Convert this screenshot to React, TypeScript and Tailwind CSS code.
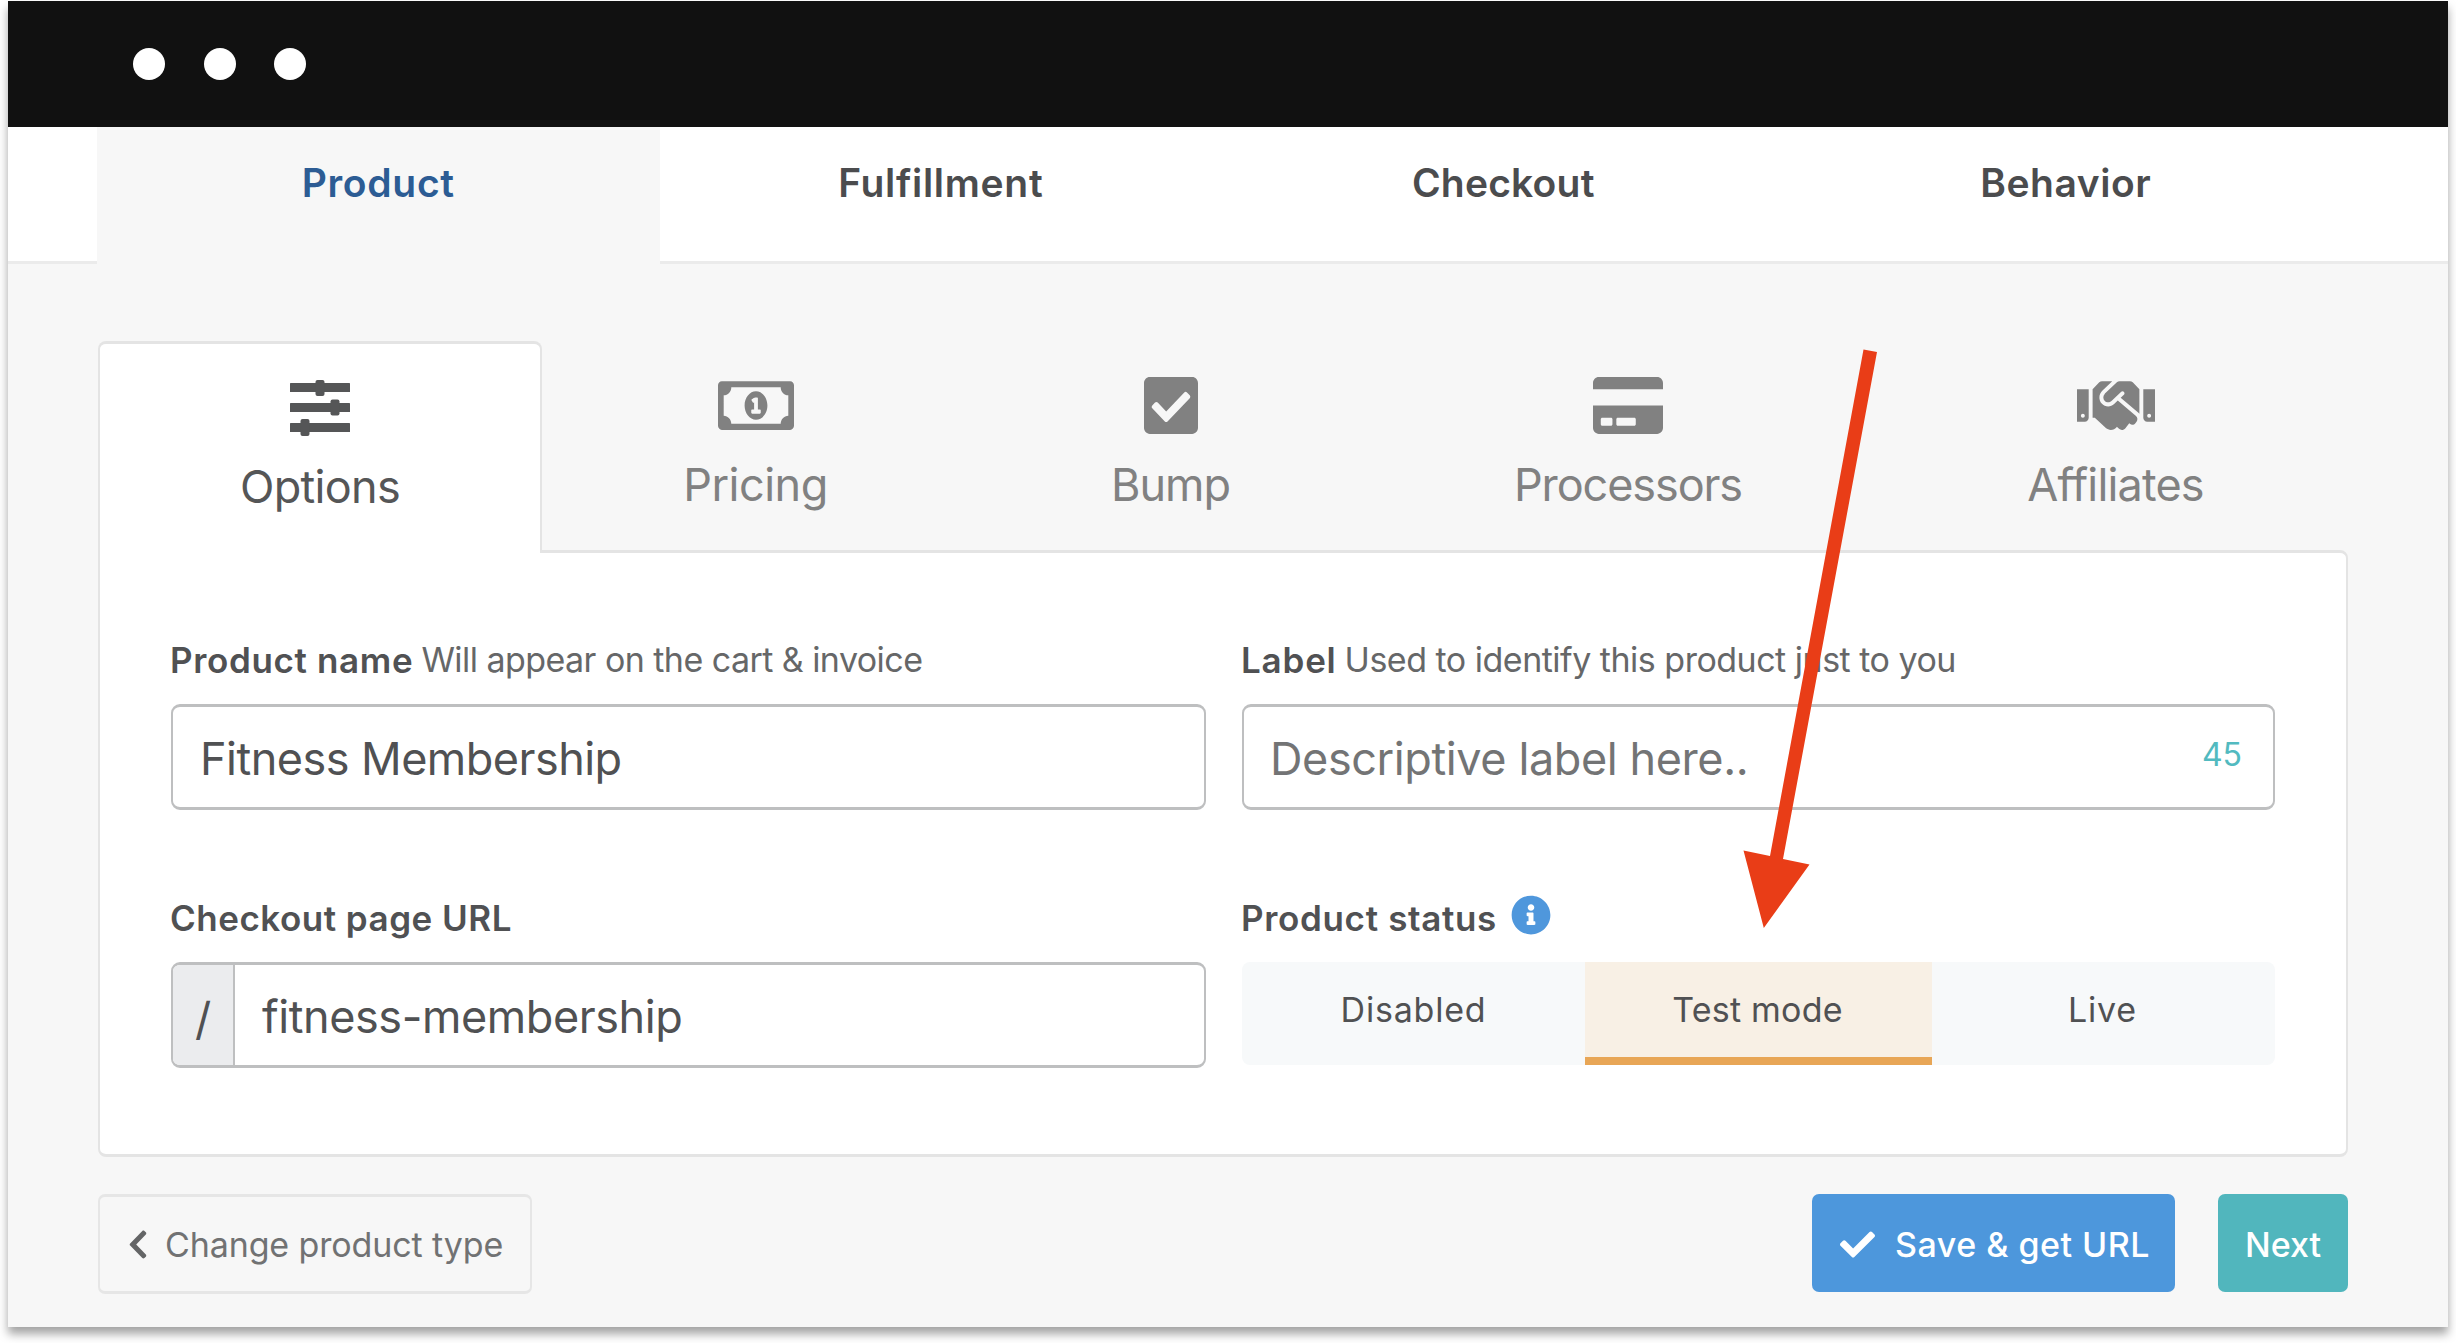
import type { ReactNode } from "react";
import {
  FaCheck,
  FaCheckSquare,
  FaChevronLeft,
  FaCreditCard,
  FaHandshake,
  FaInfoCircle,
  FaRegMoneyBillAlt,
} from "react-icons/fa";

function SlidersIcon() {
  return (
    <svg viewBox="0 0 60 57" className="h-[57px] w-[60px]" fill="currentColor">
      <rect x="0" y="3" width="60" height="9" rx="0.5" />
      <rect x="0" y="23" width="60" height="9" rx="0.5" />
      <rect x="0" y="43" width="60" height="9" rx="0.5" />
      <rect x="25.5" y="0" width="9" height="16" rx="2" />
      <rect x="40.5" y="19.5" width="9" height="16" rx="2" />
      <rect x="10.5" y="39" width="9" height="17" rx="2" />
    </svg>
  );
}

const mainTabs = [
  { label: "Product", style: "bg-[#f7f7f7] text-[#2c5c94] tracking-[0.7px]" },
  { label: "Fulfillment", style: "border-b-[3px] border-[#ebebeb] tracking-[0.7px]" },
  { label: "Checkout", style: "border-b-[3px] border-[#ebebeb] tracking-[0.2px]" },
  { label: "Behavior", style: "border-b-[3px] border-[#ebebeb] tracking-[0.55px]" },
];

const subTabs = [
  {
    label: "Pricing",
    width: "w-[427px]",
    tracking: "tracking-[-0.5px]",
    icon: <FaRegMoneyBillAlt preserveAspectRatio="none" className="h-[65px] w-[76px]" />,
  },
  {
    label: "Bump",
    width: "w-[403px]",
    tracking: "tracking-[-1px]",
    icon: <FaCheckSquare preserveAspectRatio="none" className="h-[65px] w-[54px]" />,
  },
  {
    label: "Processors",
    width: "w-[512px]",
    tracking: "tracking-[-1.1px]",
    icon: <FaCreditCard preserveAspectRatio="none" className="h-[65px] w-[70px]" />,
  },
  {
    label: "Affiliates",
    width: "w-[463px]",
    tracking: "tracking-[-0.83px]",
    icon: <FaHandshake preserveAspectRatio="none" className="h-[65px] w-[78px]" />,
  },
];

function FieldLabel({ title, children, tracking }: { title: string; children?: ReactNode; tracking: string }) {
  return (
    <div className="mb-6 flex h-10 items-center gap-2 text-[35px] leading-10 whitespace-nowrap">
      <span className={`-ml-px font-semibold ${tracking}`}>{title}</span>
      {children}
    </div>
  );
}

export default function App() {
  return (
    <div className="h-[1343px] w-[2456px] overflow-hidden bg-white pt-px pl-2 font-['Inter',sans-serif] text-[#505153]">
      <div className="relative flex h-[1326px] w-[2440px] flex-col bg-[#f7f7f7] shadow-[0_7px_9px_rgba(0,0,0,0.36)]">
        <div className="flex h-[126px] shrink-0 items-center gap-[38.5px] bg-[#111111] pl-[125px]">
          <span className="size-8 rounded-full bg-white" />
          <span className="size-8 rounded-full bg-white" />
          <span className="size-8 rounded-full bg-white" />
        </div>

        <nav className="flex h-[137px] shrink-0 bg-white text-[39px] leading-[48px] font-semibold text-[#4b4c4e]">
          <div className="w-[89px] border-b-[3px] border-[#ebebeb]" />
          {mainTabs.map((t) => (
            <div key={t.label} className={`w-[562.5px] pt-8 text-center ${t.style}`}>
              {t.label}
            </div>
          ))}
          <div className="flex-1 border-b-[3px] border-[#ebebeb]" />
        </nav>

        <div className="mt-[77px] ml-[90px] w-[2250px]">
          <div className="relative z-10 mb-[-3px] flex h-[212px] text-[45px] leading-[54px] text-[#818181]">
            <div className="flex w-[444px] flex-col items-center rounded-t-[8px] border-x-2 border-t-[3px] border-[#e4e4e4] bg-white pt-[36px] text-[#555657]">
              <SlidersIcon />
              <span className="mt-[23px] tracking-[-0.7px]">Options</span>
            </div>
            {subTabs.map((t) => (
              <div key={t.label} className={`flex flex-col items-center pt-[36px] ${t.width}`}>
                <div className="flex h-[57px] items-center">{t.icon}</div>
                <span className={`mt-[24px] ${t.tracking}`}>{t.label}</span>
              </div>
            ))}
          </div>

          <div className="grid h-[607px] grid-cols-[1035px_1033px] content-start gap-x-9 gap-y-[88px] rounded-r-[8px] rounded-bl-[8px] border-x-2 border-y-[3px] border-[#e4e4e4] bg-white pt-[87px] pl-[71px]">
            <div>
              <FieldLabel title="Product name" tracking="tracking-[0.65px]">
                <span className="text-[34px] tracking-[-0.55px] text-[#666768]">Will appear on the cart &amp; invoice</span>
              </FieldLabel>
              <div className="flex h-[106px] items-center rounded-[9px] border-x-2 border-y-[3px] border-[#bebfc0] pt-1 pl-[27px] text-[45px] tracking-[-0.52px]">
                Fitness Membership
              </div>
            </div>

            <div>
              <FieldLabel title="Label" tracking="tracking-[0.8px]">
                <span className="text-[34px] tracking-[-0.5px] text-[#666768]">
                  Used to identify this product just to you
                </span>
              </FieldLabel>
              <div className="flex h-[106px] items-center justify-between rounded-[9px] border-x-2 border-y-[3px] border-[#bebfc0] pr-[31px] pl-[26px]">
                <span className="pt-1 text-[45px] tracking-[-0.4px] text-[#737475]">Descriptive label here..</span>
                <span className="pb-1 text-[32px] text-[#52bac0]">45</span>
              </div>
            </div>

            <div>
              <FieldLabel title="Checkout page URL" tracking="tracking-[0.5px]" />
              <div className="flex h-[106px] overflow-hidden rounded-[9px] border-x-2 border-y-[3px] border-[#bebfc0] text-[45px]">
                <div className="flex w-[62px] items-center justify-center border-r-2 border-[#bebfc0] bg-[#ebecee] pt-2">
                  /
                </div>
                <div className="flex flex-1 items-center pt-1 pl-[27px] tracking-[-0.42px]">fitness-membership</div>
              </div>
            </div>

            <div>
              <FieldLabel title="Product status" tracking="tracking-[0.66px]">
                <FaInfoCircle className="mb-1.5 ml-[6px] size-10 text-[#4f97dc]" />
              </FieldLabel>
              <div className="flex h-[103px] overflow-hidden rounded-[8px] bg-[#f7f9fa] text-[34px]">
                <div className="flex w-[343px] items-center justify-center pb-[8px] tracking-[0.8px]">Disabled</div>
                <div className="flex w-[347px] items-center justify-center border-b-8 border-[#e8a656] bg-[#f8f0e5] pr-[2px] tracking-[0.2px]">
                  Test mode
                </div>
                <div className="flex w-[343px] items-center justify-center pr-[2px] pb-[8px] tracking-[0.8px]">Live</div>
              </div>
            </div>
          </div>

          <div className="mt-[37px] flex items-start text-[34px]">
            <div className="flex h-[100px] w-[434px] items-center rounded-[7px] border-x-2 border-y-[3px] border-[#e6e6e6] pl-[28px] text-[#717273]">
              <FaChevronLeft preserveAspectRatio="none" className="h-[33px] w-[20px] text-[#646566]" />
              <span className="ml-[17px] tracking-[-0.12px]">Change product type</span>
            </div>
            <div className="ml-auto flex h-[98px] w-[363px] items-center rounded-[7px] bg-[#4d97dc] pt-[2px] pl-7 font-medium text-white">
              <FaCheck className="size-[35px]" />
              <span className="ml-5 tracking-[0.5px]">Save &amp; get URL</span>
            </div>
            <div className="ml-[43px] flex h-[98px] w-[130px] items-center justify-center rounded-[7px] bg-[#51b6bd] pt-[2px] font-medium text-white">
              Next
            </div>
          </div>
        </div>

        <svg
          viewBox="1740 345 145 590"
          className="absolute top-[344px] left-[1732px] z-20 h-[590px] w-[145px]"
          fill="#e93d17"
        >
          <path d="M1863.5 349.5 L1877 352 L1783 859 L1809.5 864.5 L1763.8 928 L1743.5 850.5 L1770 856 Z" />
        </svg>
      </div>
    </div>
  );
}
